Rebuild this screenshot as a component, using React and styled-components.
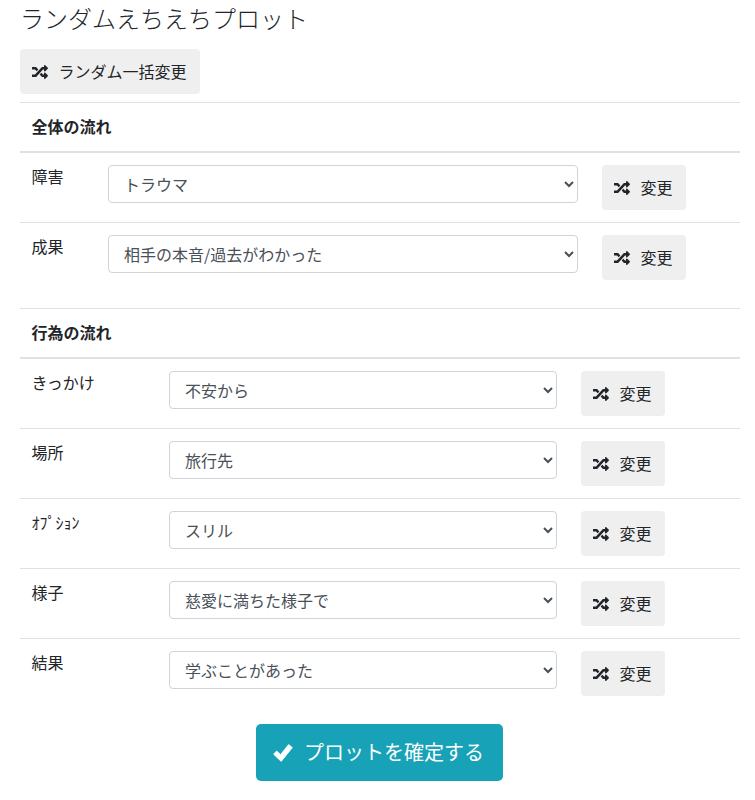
import styled, { createGlobalStyle } from 'styled-components'
import { FaRandom } from 'react-icons/fa'

const GlobalStyle = createGlobalStyle`
    * {
        box-sizing: border-box;
    }
    body {
        margin: 0;
        background: #fff;
        color: #212529;
        font-family: "Noto Sans CJK JP", "Noto Sans", sans-serif;
        font-size: 16px;
        line-height: 24px;
    }
`

const Page = styled.div`
    padding: 3px 15px 19px 20px;
`

const Title = styled.h1`
    margin: 0 0 17px;
    font-size: 24px;
    line-height: 29px;
    font-weight: 300;
`

const ShuffleButton = styled.button`
    display: inline-flex;
    align-items: center;
    gap: 10.5px;
    width: 84px;
    height: 45px;
    padding: 0 12px;
    border: 0;
    border-radius: 4px;
    background: #efefef;
    color: #212529;
    font: inherit;
    white-space: nowrap;
    justify-self: end;
    svg {
        flex-shrink: 0;
    }
    span {
        line-height: 22px;
        padding-bottom: 2px;
    }
`

const AllButton = styled(ShuffleButton)`
    display: flex;
    width: 180px;
    margin-bottom: 8px;
    justify-self: start;
`

const Table = styled.section`
    margin-bottom: 16px;
`

const Heading = styled.div`
    padding: 11px 11.5px 13px;
    border-top: 1px solid #dee2e6;
    border-bottom: 2px solid #dee2e6;
    font-weight: 700;
`

const Row = styled.div`
    display: grid;
    grid-template-columns: ${p => p.$label}px ${p => p.$select}px 108px;
    align-items: start;
    padding: 12px;
    & + & {
        border-top: 1px solid #dee2e6;
    }
`

const Label = styled.div`
    line-height: 22px;
    margin-left: -0.5px;
`

const Select = styled.select`
    width: 100%;
    height: 38px;
    padding: 5px 12px 7px 11px;
    border: 1px solid #ced4da;
    border-radius: 4px;
    background-color: #fff;
    color: #495057;
    font: inherit;
`

const Footer = styled.div`
    display: flex;
    justify-content: center;
    padding-right: 1px;
`

const ConfirmButton = styled.button`
    display: flex;
    align-items: center;
    gap: 11px;
    width: 247px;
    height: 57px;
    padding: 0 17px;
    border: 0;
    border-radius: 5px;
    background: #17a2b8;
    color: #fff;
    font: inherit;
    font-size: 20px;
    white-space: nowrap;
    svg {
        flex-shrink: 0;
    }
    span {
        padding-bottom: 2px;
    }
`

const CheckIcon = () => (
    <svg width="20" height="20" viewBox="0 0 20 20" fill="#fff">
        <path d="M0.6 11.2 3.6 8 7.6 11.6 15.6 1.6 19.4 4.6 8.2 18.4Z" stroke="#fff" strokeWidth="0.8" strokeLinejoin="round" />
    </svg>
)

const overall = [
    ['障害', 'トラウマ'],
    ['成果', '相手の本音/過去がわかった'],
]

const actions = [
    ['きっかけ', '不安から'],
    ['場所', '旅行先'],
    ['ｵﾌﾟｼｮﾝ', 'スリル'],
    ['様子', '慈愛に満ちた様子で'],
    ['結果', '学ぶことがあった'],
]

const Rows = ({ items, label, select }) =>
    items.map(([name, value]) => (
        <Row key={name} $label={label} $select={select}>
            <Label>{name}</Label>
            <Select defaultValue={value}>
                <option>{value}</option>
            </Select>
            <ShuffleButton>
                <FaRandom size={16} />
                <span>変更</span>
            </ShuffleButton>
        </Row>
    ))

const App = () => {
    return (
        <Page>
            <GlobalStyle />
            <Title>ランダムえちえちプロット</Title>
            <AllButton>
                <FaRandom size={16} />
                <span>ランダム一括変更</span>
            </AllButton>
            <Table>
                <Heading>全体の流れ</Heading>
                <Rows items={overall} label={76} select={470} />
            </Table>
            <Table>
                <Heading>行為の流れ</Heading>
                <Rows items={actions} label={137} select={388} />
            </Table>
            <Footer>
                <ConfirmButton>
                    <CheckIcon />
                    <span>プロットを確定する</span>
                </ConfirmButton>
            </Footer>
        </Page>
    )
}

export default App
